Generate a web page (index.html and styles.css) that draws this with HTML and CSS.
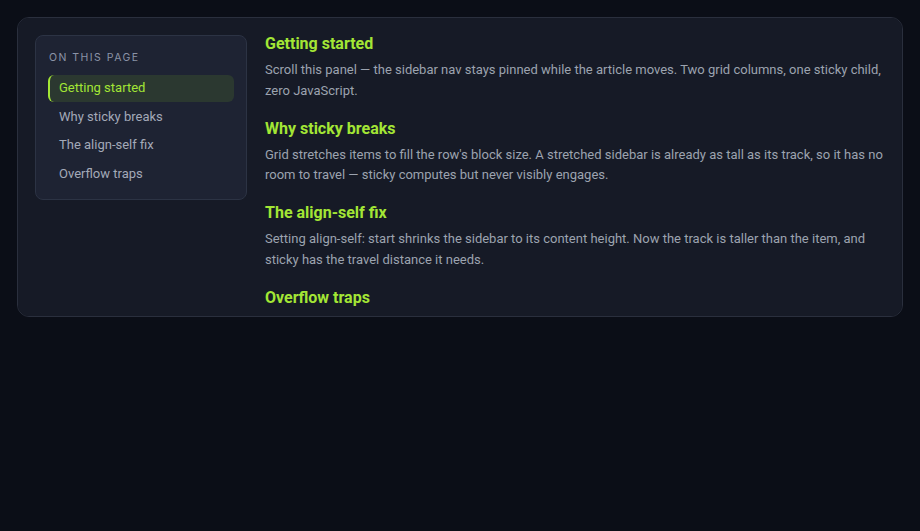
FILE: index.html
```html
<!DOCTYPE html>
<html lang="en">
  <head>
    <meta charset="UTF-8" />
    <meta name="viewport" content="width=device-width, initial-scale=1.0" />
    <title>Sticky sidebar</title>
    <link rel="stylesheet" href="styles.css">
  </head>

  <body>
    <div class="panel">
      <div class="layout">
        <nav class="toc">
          <div class="toc-title">On this page</div>
          <a class="toc-link active" href="#start">Getting started</a>
          <a class="toc-link" href="#why">Why sticky breaks</a>
          <a class="toc-link" href="#fix">The align-self fix</a>
          <a class="toc-link" href="#overflow">Overflow traps</a>
        </nav>

        <article class="article">
          <section id="start">
            <h2>Getting started</h2>
            <p>
              Scroll this panel — the sidebar nav stays pinned while the article
              moves. Two grid columns, one sticky child, zero JavaScript.
            </p>
          </section>
          <section id="why">
            <h2>Why sticky breaks</h2>
            <p>
              Grid stretches items to fill the row's block size. A stretched
              sidebar is already as tall as its track, so it has no room to
              travel — sticky computes but never visibly engages.
            </p>
          </section>
          <section id="fix">
            <h2>The align-self fix</h2>
            <p>
              Setting align-self: start shrinks the sidebar to its content
              height. Now the track is taller than the item, and sticky has the
              travel distance it needs.
            </p>
          </section>
          <section id="overflow">
            <h2>Overflow traps</h2>
            <p>
              Any ancestor with overflow: hidden between the sticky element and
              the scroller becomes its new scroll container, and the sidebar
              quietly stops sticking to the panel you expected.
            </p>
          </section>
        </article>
      </div>
    </div>
  </body>
</html>
```

FILE: styles.css
```css
body {
  font-family: Roboto, Inter, "Noto Sans", sans-serif;
  margin: 0;
  padding: 17px;
  background-color: #0b0e17;
  color: #9ca3af;
}

.panel {
  height: 300px;
  box-sizing: border-box;
  overflow-y: auto;
  scrollbar-width: none;
  background-color: #161a26;
  border: 1px solid #2a2f3d;
  border-radius: 12px;
  padding: 17px;
}

.layout {
  display: grid;
  grid-template-columns: 212px 1fr;
  gap: 18px;
}

.toc {
  position: sticky;
  top: 0;
  align-self: start;
  display: flex;
  flex-direction: column;
  gap: 2px;
  background-color: #1e2333;
  border: 1px solid #2c3344;
  border-radius: 8px;
  padding: 14px 12px 12px 12px;
}

.toc-title {
  font-family: Inter, sans-serif;
  font-size: 10.5px;
  letter-spacing: 0.14em;
  text-transform: uppercase;
  color: #8b93a7;
  margin: 1px 0 9px 1px;
}

.toc-link {
  display: block;
  font-size: 13px;
  line-height: 16.5px;
  padding: 5px 9px;
  color: #a3a9b8;
  text-decoration: none;
  border-radius: 6px;
  border-left: 2px solid transparent;
}

.toc-link.active {
  color: #a3e635;
  background-color: #2b3830;
  border-left-color: #a3e635;
}

.article {
  margin-top: -1px;
}

.article section {
  margin-bottom: 17px;
}

.article h2 {
  font-size: 16px;
  line-height: 20px;
  font-weight: 700;
  color: #a3e635;
  margin: 0 0 6px;
}

.article p {
  font-size: 13px;
  line-height: 1.6;
  margin: 0;
  color: #9ca3af;
}
```
